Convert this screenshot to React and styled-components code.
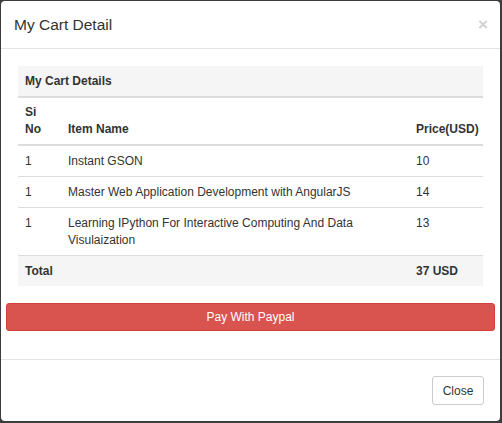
import React from "react";
import styled, { createGlobalStyle } from "styled-components";

const Global = createGlobalStyle`
  html, body { margin: 0; padding: 0; }
  body {
    background: #3d3d3d;
    font-family: "Liberation Sans", Arial, sans-serif;
    font-size: 12px;
    line-height: 17px;
    color: #333;
  }
`;

const Modal = styled.div`
  margin: 1px 2px 2px 1px;
  width: 499px;
  min-height: 420px;
  background: #fff;
  border-radius: 4px;
  display: flex;
  flex-direction: column;
  box-sizing: border-box;
`;

const Header = styled.div`
  flex: 0 0 auto;
  height: 47px;
  border-bottom: 1px solid #e5e5e5;
  display: flex;
  align-items: center;
  justify-content: space-between;
  padding: 0 12px 0 13px;
`;

const Title = styled.h4`
  margin: 0;
  font-size: 15.5px;
  font-weight: 400;
  color: #333;
  line-height: 20px;
`;

const CloseX = styled.button`
  border: 0;
  background: none;
  padding: 0;
  font-family: "Liberation Sans", Arial, sans-serif;
  font-size: 17px;
  font-weight: 700;
  color: #d0d0d0;
  line-height: 1;
  cursor: pointer;
`;

const Body = styled.div`
  flex: 0 0 auto;
  padding: 17px 5px 28px 5px;
`;

const TableWrap = styled.div`
  margin: 0 12px 17px 12px;
`;

const Table = styled.table`
  width: 100%;
  border-collapse: collapse;
  table-layout: fixed;
`;

const Col = styled.col`
  width: ${(p) => (p.$w ? `${p.$w}px` : "auto")};
`;

const CaptionCell = styled.th`
  background: #f5f5f5;
  text-align: left;
  font-weight: 700;
  padding: 7px 7px 6px;
  border-bottom: 2px solid #dcdcdc;
`;

const HeadCell = styled.th`
  text-align: left;
  font-weight: 700;
  padding: 6px 7px 6px;
  vertical-align: bottom;
  border-bottom: 2px solid #dcdcdc;
`;

const Row = styled.tr`
  background: ${(p) => (p.$shade ? "#f5f5f5" : "transparent")};
`;

const Cell = styled.td`
  padding: 7px 7px 6px;
  vertical-align: top;
  border-top: ${(p) => (p.$first ? "0" : "1px solid #dddddd")};
  font-weight: ${(p) => (p.$bold ? 700 : 400)};
`;

const PayButton = styled.button`
  display: block;
  width: 100%;
  height: 28px;
  background: #d9534f;
  border: 1px solid #d43f3a;
  border-radius: 3px;
  color: #fff;
  font-family: "Liberation Sans", Arial, sans-serif;
  font-size: 12px;
  cursor: pointer;
`;

const Footer = styled.div`
  flex: 0 0 auto;
  margin-top: auto;
  border-top: 1px solid #e5e5e5;
  padding: 16px 16px 16px;
  display: flex;
  justify-content: flex-end;
`;

const DefaultButton = styled.button`
  height: 29px;
  width: 52px;
  background: #fff;
  border: 1px solid #cccccc;
  border-radius: 3px;
  color: #333;
  font-family: "Liberation Sans", Arial, sans-serif;
  font-size: 12px;
  cursor: pointer;
`;

const items = [
  { no: 1, name: "Instant GSON", price: 10 },
  { no: 1, name: "Master Web Application Development with AngularJS", price: 14 },
  { no: 1, name: "Learning IPython For Interactive Computing And Data Visulaization", price: 13 },
];

export default function App() {
  return (
    <>
      <Global />
      <Modal>
        <Header>
          <Title>My Cart Detail</Title>
          <CloseX aria-label="Close">×</CloseX>
        </Header>
        <Body>
          <TableWrap>
            <Table>
              <colgroup>
                <Col $w={43} />
                <Col />
                <Col $w={74} />
              </colgroup>
              <thead>
                <tr>
                  <CaptionCell colSpan={3}>My Cart Details</CaptionCell>
                </tr>
                <tr>
                  <HeadCell>Si No</HeadCell>
                  <HeadCell>Item Name</HeadCell>
                  <HeadCell>Price(USD)</HeadCell>
                </tr>
              </thead>
              <tbody>
                {items.map((it, i) => (
                  <Row key={i}>
                    <Cell $first={i === 0}>{it.no}</Cell>
                    <Cell $first={i === 0}>{it.name}</Cell>
                    <Cell $first={i === 0}>{it.price}</Cell>
                  </Row>
                ))}
                <Row $shade>
                  <Cell $bold>Total</Cell>
                  <Cell />
                  <Cell $bold>37 USD</Cell>
                </Row>
              </tbody>
            </Table>
          </TableWrap>
          <PayButton>Pay With Paypal</PayButton>
        </Body>
        <Footer>
          <DefaultButton>Close</DefaultButton>
        </Footer>
      </Modal>
    </>
  );
}
